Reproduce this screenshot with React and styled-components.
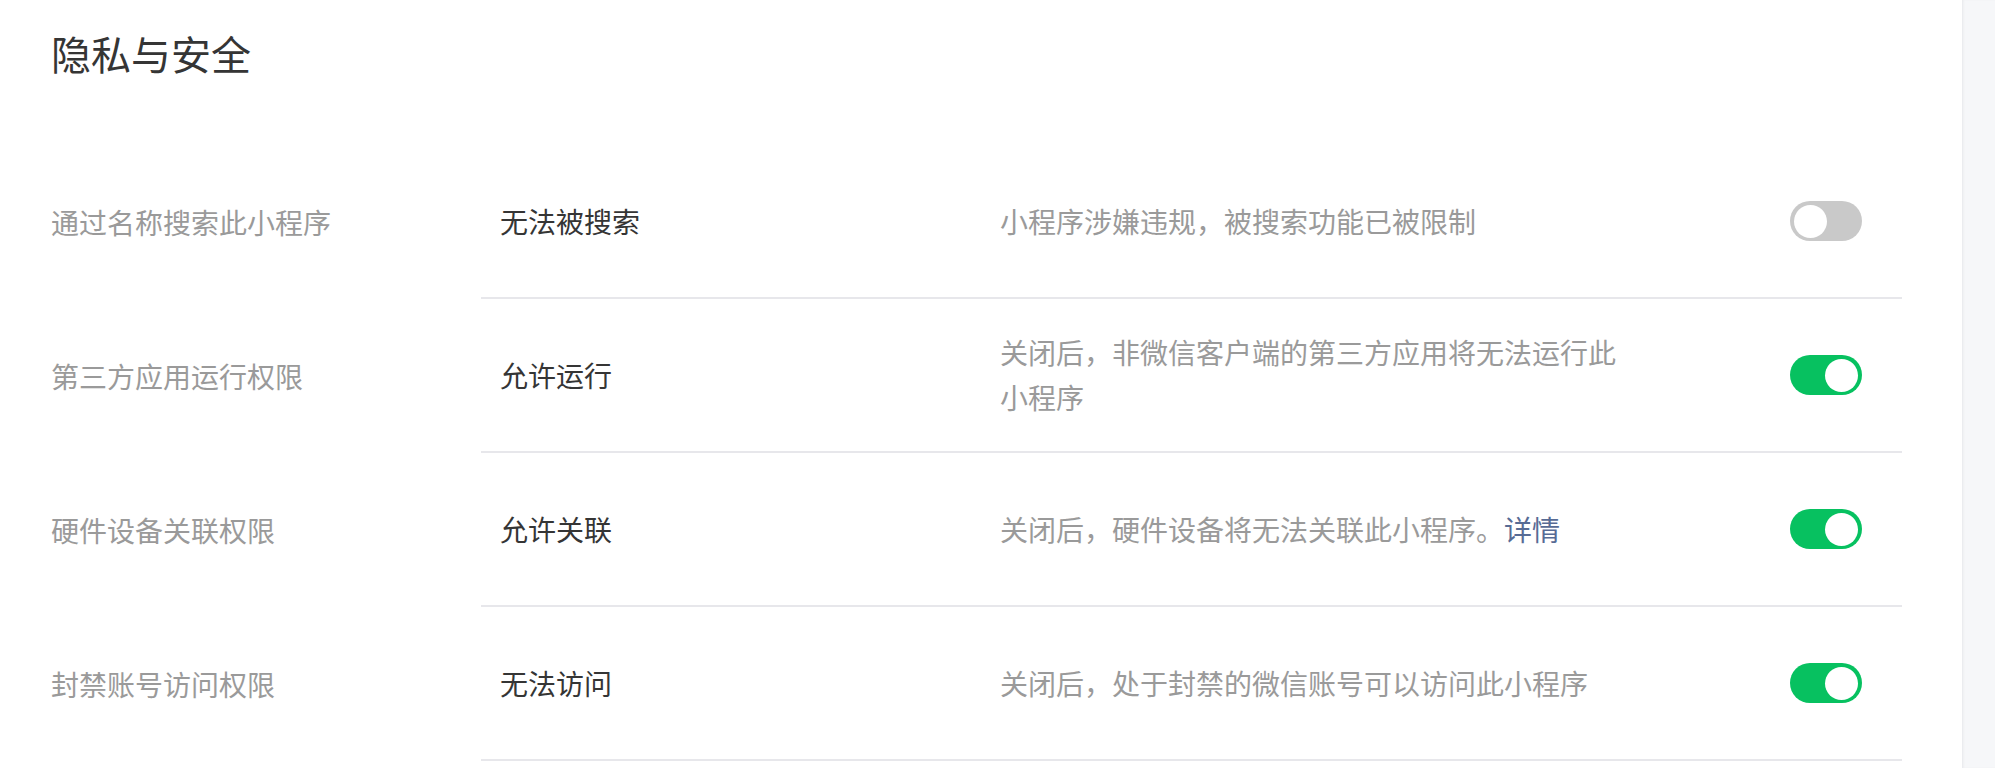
import React from "react";
import styled, { createGlobalStyle } from "styled-components";

const GlobalStyle = createGlobalStyle`
  html, body {
    margin: 0;
    padding: 0;
    background: #ffffff;
  }
  body {
    font-family: "Noto Sans CJK SC", "Noto Sans", sans-serif;
  }
`;

const rows = [
  {
    label: "通过名称搜索此小程序",
    value: "无法被搜索",
    desc: "小程序涉嫌违规，被搜索功能已被限制",
    on: false,
  },
  {
    label: "第三方应用运行权限",
    value: "允许运行",
    desc: "关闭后，非微信客户端的第三方应用将无法运行此小程序",
    on: true,
  },
  {
    label: "硬件设备关联权限",
    value: "允许关联",
    desc: "关闭后，硬件设备将无法关联此小程序。",
    link: "详情",
    on: true,
  },
  {
    label: "封禁账号访问权限",
    value: "无法访问",
    desc: "关闭后，处于封禁的微信账号可以访问此小程序",
    on: true,
  },
];

const App = () => {
  return (
    <Layout>
      <GlobalStyle />
      <Main>
        <Title>隐私与安全</Title>
        <List>
          {rows.map((row) => (
            <Row key={row.label}>
              <Label>{row.label}</Label>
              <RowBody>
                <Value>{row.value}</Value>
                <Desc>
                  {row.desc}
                  {row.link && <Link href="#">{row.link}</Link>}
                </Desc>
                <Switch $on={row.on}>
                  <Knob />
                </Switch>
              </RowBody>
            </Row>
          ))}
        </List>
      </Main>
      <SidePanel />
    </Layout>
  );
};

const Layout = styled.div`
  display: flex;
  width: 100%;
  min-height: 768px;
`;

const Main = styled.div`
  flex: 1;
  padding: 25px 60px 0 51px;
  background: #fff;
`;

const SidePanel = styled.div`
  width: 32px;
  flex-shrink: 0;
  background: #f6f7f9;
  border-left: 1px solid #ebecef;
  box-shadow: inset 1px 0 2px rgba(0, 0, 0, 0.03);
`;

const Title = styled.h1`
  margin: 0 0 64px;
  font-size: 40px;
  line-height: 56px;
  font-weight: 400;
  color: #353535;
`;

const List = styled.div`
  display: flex;
  flex-direction: column;
`;

const Row = styled.div`
  display: flex;
  align-items: stretch;
`;

const Label = styled.div`
  width: 430px;
  flex-shrink: 0;
  display: flex;
  align-items: center;
  font-size: 28px;
  color: #9a9a9a;
`;

const RowBody = styled.div`
  flex: 1;
  display: flex;
  align-items: center;
  box-sizing: border-box;
  min-height: 154px;
  padding: 26px 40px 26px 19px;
  border-bottom: 2px solid #e7e7eb;
`;

const Value = styled.div`
  width: 500px;
  flex-shrink: 0;
  font-size: 28px;
  line-height: 45px;
  color: #353535;
`;

const Desc = styled.div`
  width: 630px;
  font-size: 28px;
  line-height: 45px;
  color: #9a9a9a;
`;

const Link = styled.a`
  color: #576b95;
  text-decoration: none;
`;

const Switch = styled.div`
  margin-left: auto;
  width: 72px;
  height: 40px;
  box-sizing: border-box;
  padding: 0 4px;
  border-radius: 20px;
  display: flex;
  align-items: center;
  justify-content: ${(p) => (p.$on ? "flex-end" : "flex-start")};
  background: ${(p) => (p.$on ? "#07c160" : "#c9c9c9")};
`;

const Knob = styled.span`
  width: 33px;
  height: 33px;
  border-radius: 50%;
  background: #fff;
`;

export default App;
